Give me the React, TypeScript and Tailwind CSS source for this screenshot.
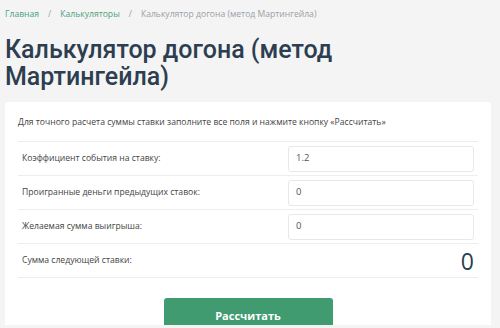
import React from "react";

const rows = [
  { label: "Коэффициент события на ставку:", value: "1.2" },
  { label: "Проигранные деньги предыдущих ставок:", value: "0" },
  { label: "Желаемая сумма выигрыша:", value: "0" },
];

export default function App() {
  return (
    <div className="w-[500px] h-[328px] bg-[#f4f4f4] overflow-hidden" style={{ fontFamily: '"Open Sans", "Noto Sans", sans-serif' }}>
      <div className="h-[325px] overflow-hidden px-[5px]">
        <nav className="flex items-center h-[28px] text-[8.6px] text-[#9aa0a6]">
          <span className="text-[#4aa37a]">Главная</span>
          <span className="mx-[9px]">/</span>
          <span className="text-[#4aa37a]">Калькуляторы</span>
          <span className="mx-[9px]">/</span>
          <span>Калькулятор догона (метод Мартингейла)</span>
        </nav>
        <h1
          className="mt-[8px] text-[25px] leading-[27px] font-medium text-[#2c3e50] w-[360px]"
          style={{ fontFamily: 'Roboto, "Open Sans", sans-serif' }}
        >
          Калькулятор догона (метод Мартингейла)
        </h1>
        <div className="mt-[12px] w-[486px] bg-white rounded-[3px] px-[13px] pt-[11px] pb-[20px]">
          <p className="text-[8.6px] text-[#444] h-[28px] leading-[18px]">
            Для точного расчета суммы ставки заполните все поля и нажмите кнопку «Рассчитать»
          </p>
          <div className="border-t border-[#eeeeee]">
            {rows.map((r) => (
              <div key={r.label} className="flex items-center h-[34px] border-b border-[#eeeeee] pl-[4px] pr-[4px]">
                <span className="flex-1 text-[8.6px] text-[#444]">{r.label}</span>
                <div className="w-[186px] h-[26px] border border-[#e8e8e8] rounded-[3px] flex items-center px-[7px] text-[9.5px] text-[#555]">
                  {r.value}
                </div>
              </div>
            ))}
            <div className="flex items-center h-[34px] border-b border-[#eeeeee] pl-[4px] pr-[4px]">
              <span className="flex-1 text-[8.6px] text-[#444]">Сумма следующей ставки:</span>
              <span className="text-[23px] leading-[30px] text-[#2c3e50]">0</span>
            </div>
          </div>
          <div className="flex justify-center mt-[20px]">
            <button className="w-[169px] h-[38px] bg-[#419b70] rounded-[3px] text-white text-[11px] font-bold pb-[2px]">
              Рассчитать
            </button>
          </div>
        </div>
      </div>
    </div>
  );
}
